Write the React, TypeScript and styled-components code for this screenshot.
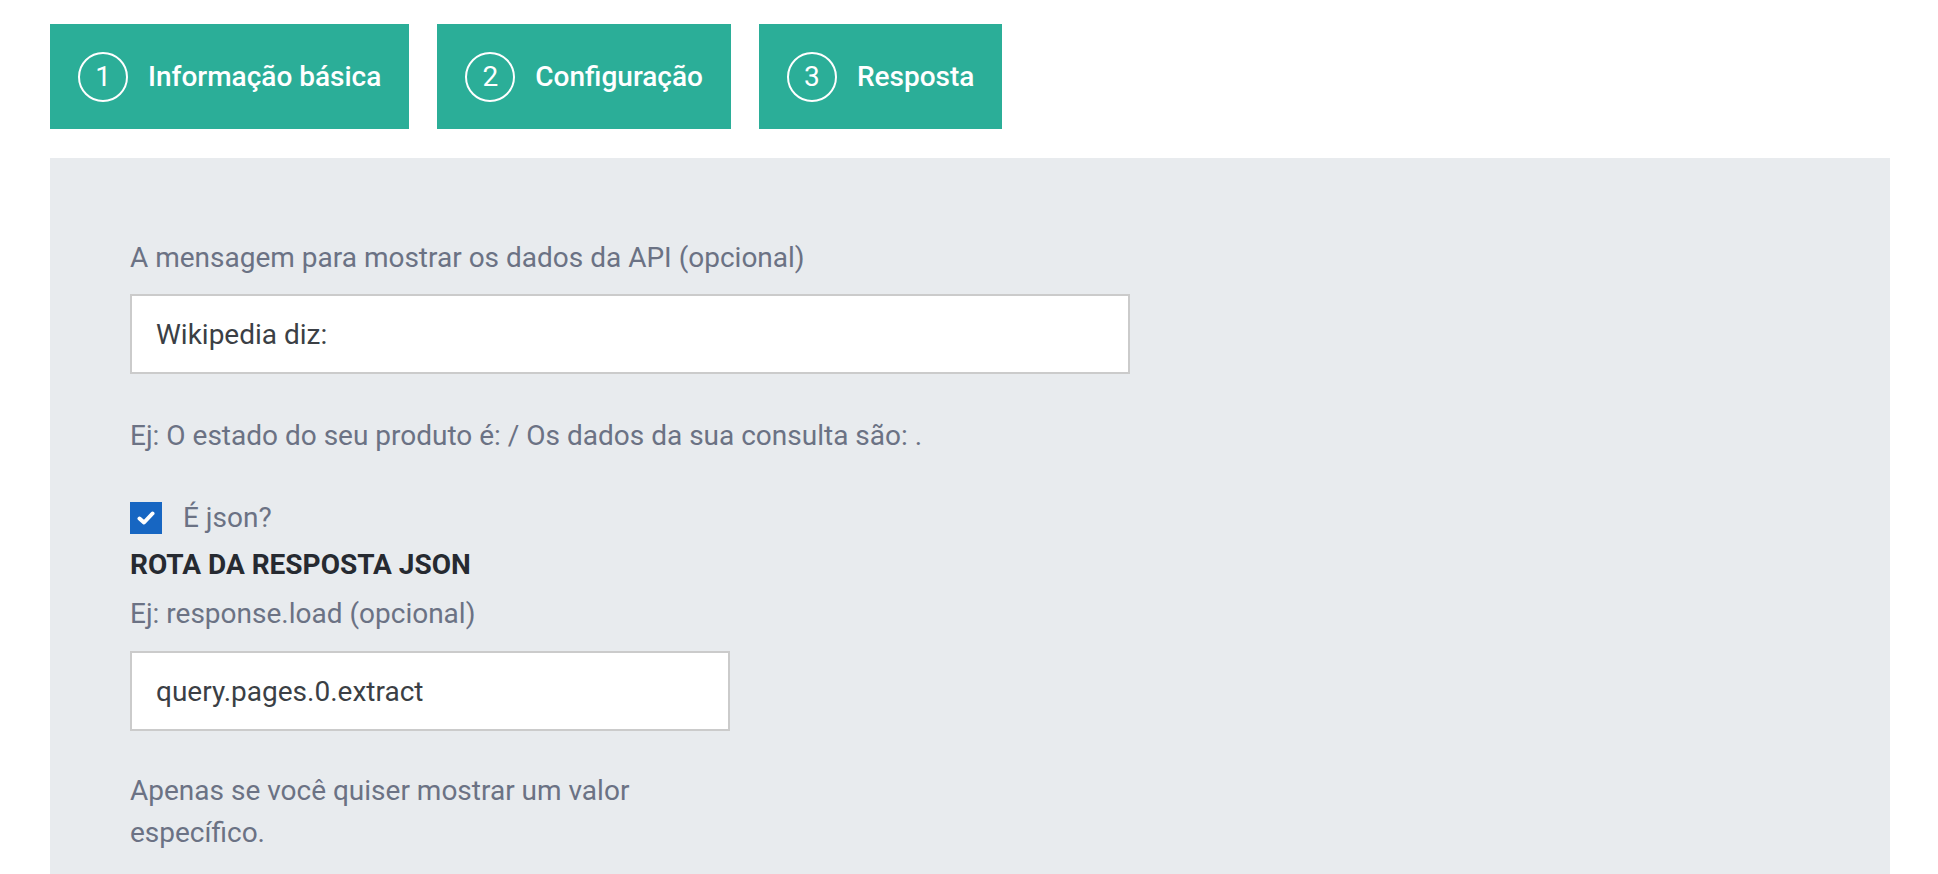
import styled, { createGlobalStyle } from 'styled-components';

const GlobalStyle = createGlobalStyle`
  * {
    box-sizing: border-box;
  }
  body {
    margin: 0;
    background: #ffffff;
    font-family: 'Roboto', 'Liberation Sans', sans-serif;
  }
`;

const Page = styled.div`
  padding: 24px 48px 0 50px;
`;

const Steps = styled.div`
  display: flex;
  gap: 28px;
`;

const Step = styled.div`
  display: flex;
  align-items: center;
  gap: 20px;
  height: 105px;
  padding: 0 28px;
  background: #2bae98;
  color: #ffffff;
  font-size: 28px;
  font-weight: 500;
  user-select: none;
`;

const StepNumber = styled.span`
  display: flex;
  align-items: center;
  justify-content: center;
  width: 50px;
  height: 50px;
  border: 2px solid #ffffff;
  border-radius: 50%;
  font-size: 28px;
  font-weight: 400;
`;

const Panel = styled.div`
  margin-top: 29px;
  padding: 79px 80px 20px;
  background: #e8ebee;
`;

const Label = styled.div`
  font-size: 28px;
  line-height: 42px;
  color: #6b7284;
`;

const Hint = styled(Label)<{ $top: number; $narrow?: boolean }>`
  margin-top: ${(p) => p.$top}px;
  max-width: ${(p) => (p.$narrow ? '600px' : 'none')};
`;

const Input = styled.input<{ $width: number; $top: number }>`
  display: block;
  width: ${(p) => p.$width}px;
  height: 80px;
  margin-top: ${(p) => p.$top}px;
  padding: 0 24px;
  border: 2px solid #cbcbcb;
  background: #ffffff;
  font-family: inherit;
  font-size: 28px;
  color: #3b3f45;
  outline: none;
`;

const CheckRow = styled.label`
  display: flex;
  align-items: center;
  gap: 21px;
  margin-top: 40px;
  font-size: 28px;
  line-height: 42px;
  color: #6b7284;
`;

const CheckBox = styled.span`
  display: flex;
  align-items: center;
  justify-content: center;
  width: 32px;
  height: 32px;
  background: #1766c2;
`;

const Heading = styled.div`
  margin-top: 5px;
  font-size: 28px;
  line-height: 42px;
  font-weight: 700;
  color: #262a31;
`;

const steps = ['Informação básica', 'Configuração', 'Resposta'];

const App = () => {
  return (
    <>
      <GlobalStyle />
      <Page>
        <Steps>
          {steps.map((s, i) => (
            <Step key={s}>
              <StepNumber>{i + 1}</StepNumber>
              {s}
            </Step>
          ))}
        </Steps>
        <Panel>
          <Label>A mensagem para mostrar os dados da API (opcional)</Label>
          <Input $width={1000} $top={15} defaultValue="Wikipedia diz:" />
          <Hint $top={41}>Ej: O estado do seu produto é: / Os dados da sua consulta são: .</Hint>
          <CheckRow>
            <CheckBox>
              <svg width="18" height="14" viewBox="0 0 18 14">
                <polyline points="2.5,7.5 7,11.5 15.5,2.5" fill="none" stroke="#ffffff" strokeWidth="4" strokeLinecap="round" strokeLinejoin="round" />
              </svg>
            </CheckBox>
            É json?
          </CheckRow>
          <Heading>ROTA DA RESPOSTA JSON</Heading>
          <Hint $top={7}>Ej: response.load (opcional)</Hint>
          <Input $width={600} $top={16} defaultValue="query.pages.0.extract" />
          <Hint $top={39} $narrow>Apenas se você quiser mostrar um valor específico.</Hint>
        </Panel>
      </Page>
    </>
  );
};

export default App;
